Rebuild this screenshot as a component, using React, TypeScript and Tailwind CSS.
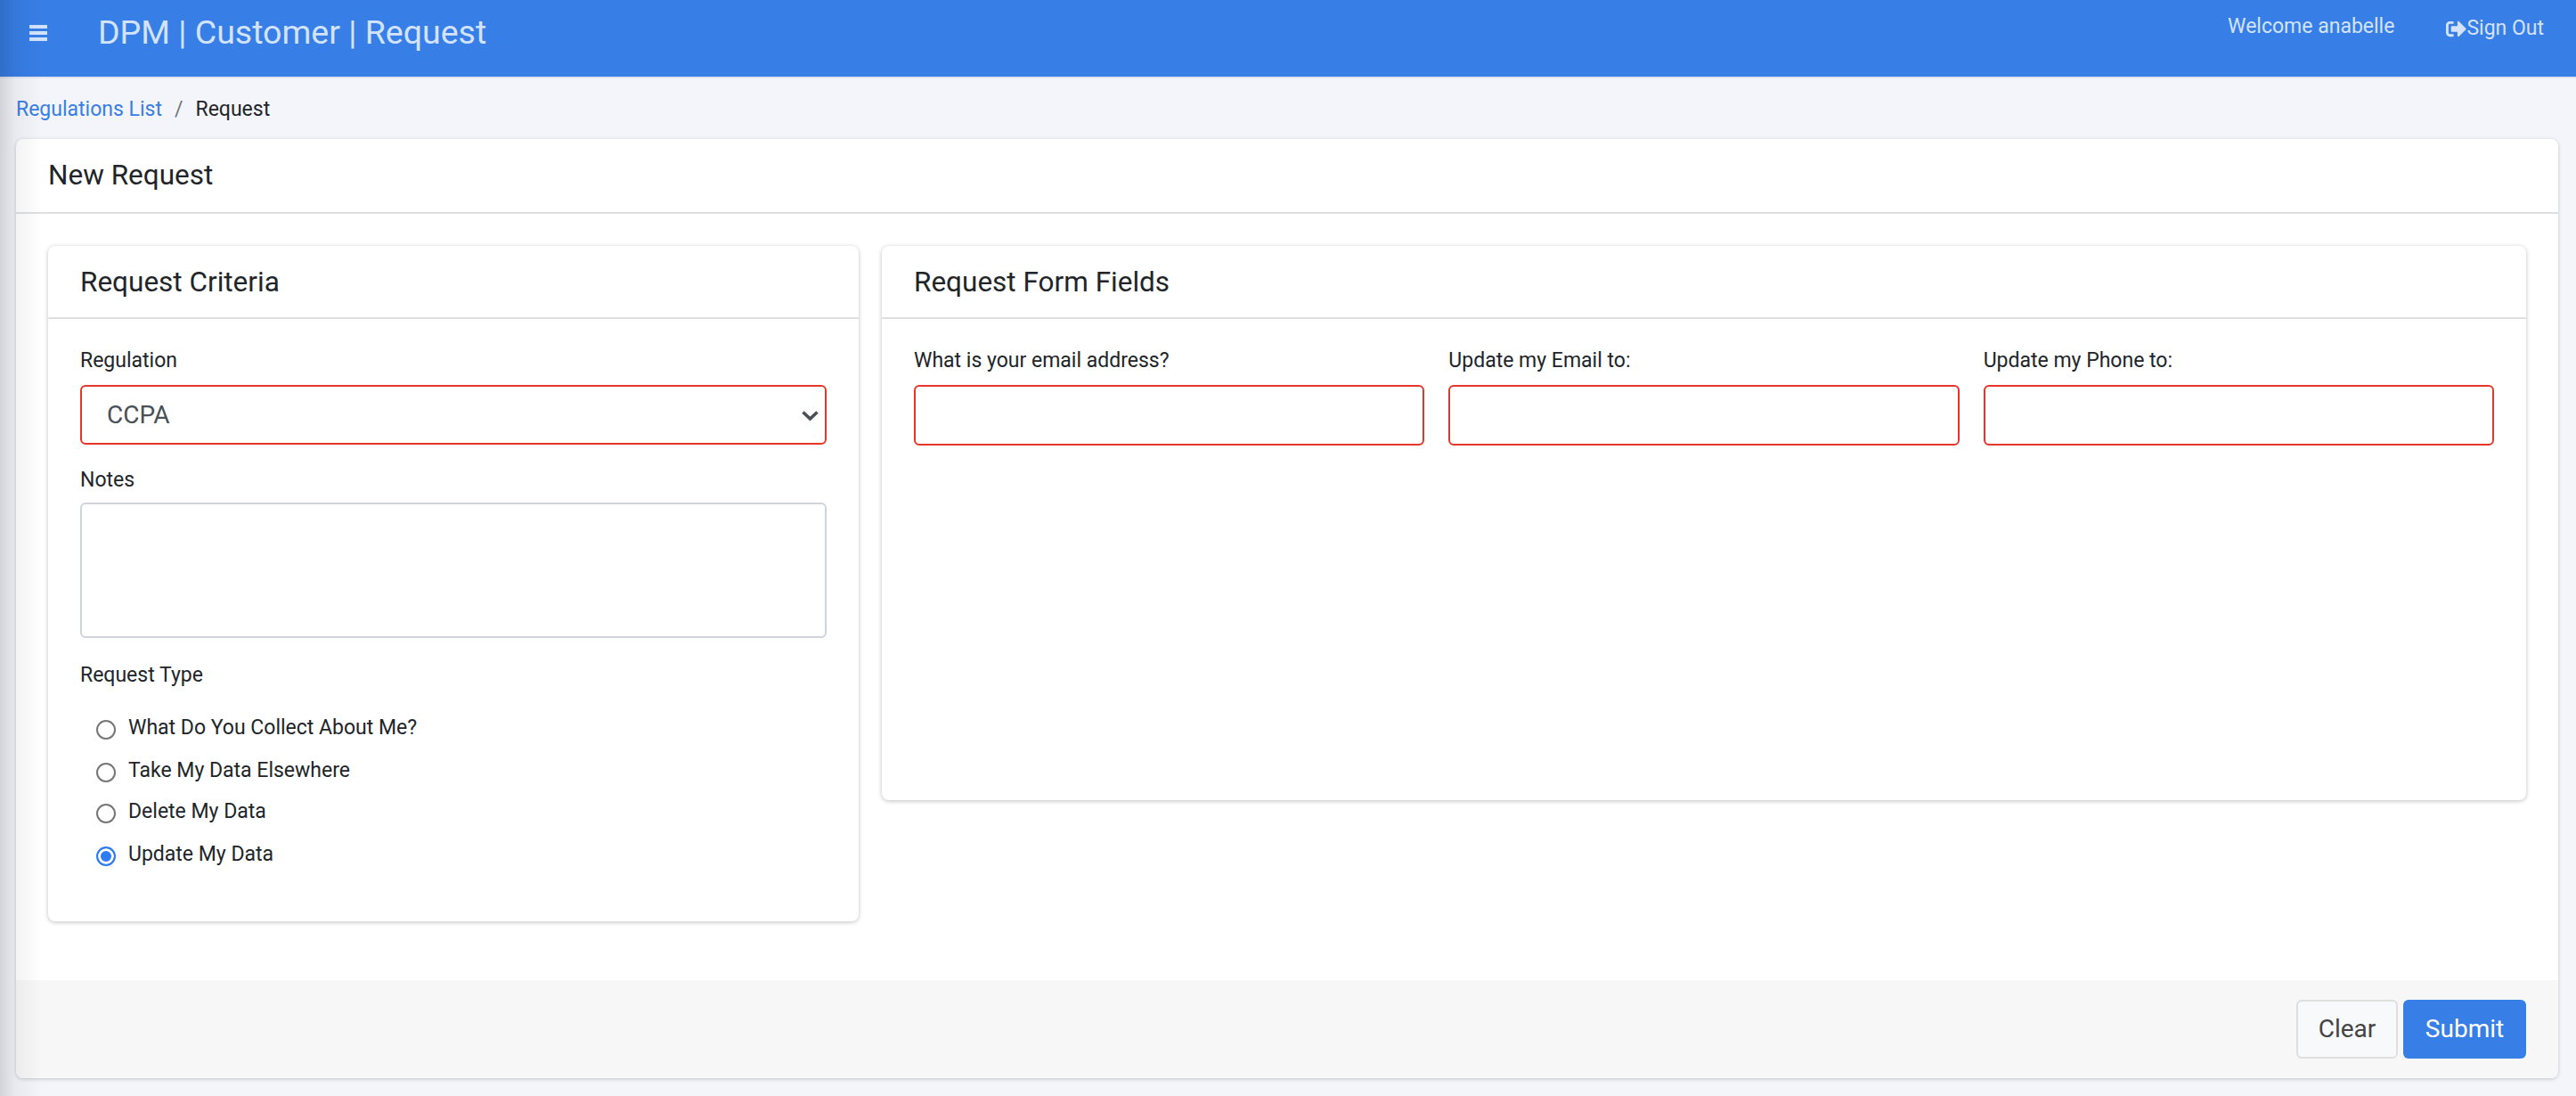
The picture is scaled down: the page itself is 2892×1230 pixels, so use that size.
import { FaSignOutAlt } from "react-icons/fa";

const requestTypes = [
  { label: "What Do You Collect About Me?", mt: "mt-0" },
  { label: "Take My Data Elsewhere", mt: "mt-[16px]" },
  { label: "Delete My Data", mt: "mt-[14px]" },
  { label: "Update My Data", mt: "mt-[16px]" },
];

const formFields = ["What is your email address?", "Update my Email to:", "Update my Phone to:"];

const SubCardHeader = ({ title }: { title: string }) => (
  <div className="flex h-[82px] items-center border-b-2 border-[#dedfe0] px-[36px] pt-[2px] text-[31.5px] text-[#212529]">
    {title}
  </div>
);

export default function App() {
  return (
    <div className="relative flex h-[1230px] flex-col overflow-hidden bg-[#f4f5fa] font-['Roboto',sans-serif] text-[#212529]">
      {/* sidebar edge shadow */}
      <div className="pointer-events-none absolute inset-y-0 left-0 z-10 w-[48px] bg-gradient-to-r from-[#00000022] via-[#0000000c] via-35% to-transparent" />

      <header className="flex h-[88px] shrink-0 items-start border-b-2 border-[#e3e6ee] bg-[#377ee6] text-[#d3e3fb]">
        <button className="ml-[33px] mt-[28px] flex w-[20px] flex-col gap-[3px]">
          <span className="h-[4px] bg-[#d3e3fb]" />
          <span className="h-[4px] bg-[#d3e3fb]" />
          <span className="h-[4px] bg-[#d3e3fb]" />
        </button>
        <h1 className="ml-[57px] mt-[14px] text-[37.5px] leading-[44px] font-normal">DPM | Customer | Request</h1>
        <span className="ml-auto mt-[15px] text-[23px] leading-[30px]">Welcome anabelle</span>
        <a className="ml-[58px] mr-[36px] mt-[17px] flex items-center text-[23px] leading-[30px]">
          <FaSignOutAlt className="h-[23px] w-[23px]" />
          Sign Out
        </a>
      </header>

      <nav className="flex h-[68px] shrink-0 items-center pl-[18px] pt-[2px] text-[23px]">
        <a className="text-[#377ee6]">Regulations List</a>
        <span className="mx-[14px] text-[#6c757d]">/</span>
        <span>Request</span>
      </nav>

      <main className="ml-[18px] mr-[20px] flex h-[1054px] flex-col rounded-[8px] bg-white shadow-[0_1px_4px_rgba(0,0,0,0.2)]">
        <div className="flex h-[84px] shrink-0 items-center border-b-2 border-[#dedfe0] px-[36px] text-[31.5px]">
          New Request
        </div>

        <div className="flex flex-1 items-start gap-[26px] px-[36px] pt-[36px]">
          <section className="h-[758px] w-[910px] shrink-0 rounded-[8px] bg-white shadow-[0_1px_5px_rgba(0,0,0,0.25)]">
            <SubCardHeader title="Request Criteria" />
            <div className="px-[36px] pt-[31px]">
              <label className="block text-[23px] leading-[32px]">Regulation</label>
              <div className="relative mt-[11px]">
                <select className="h-[67px] w-full appearance-none rounded-[6px] border-2 border-[#e8352a] bg-white px-[28px] text-[28px] text-[#495057] outline-none">
                  <option>CCPA</option>
                </select>
                <svg viewBox="0 0 19 12" className="pointer-events-none absolute right-[9px] top-[29px] h-[12px] w-[19px]" fill="none" stroke="#4a4f55" strokeWidth="3.6">
                  <path d="M1.5 1.5l8 7.5 8-7.5" />
                </svg>
              </div>

              <label className="mt-[24px] block text-[23px] leading-[32px]">Notes</label>
              <textarea className="mt-[9px] block h-[152px] w-full resize-none rounded-[6px] border-2 border-[#ced4da] bg-white outline-none" />

              <label className="mt-[26px] block text-[23px] leading-[32px]">Request Type</label>
              <div className="mt-[27px] pl-[18px]">
                {requestTypes.map((item, i) => (
                  <label key={item.label} className={`flex items-center gap-[14px] text-[23px] leading-[32px] ${item.mt}`}>
                    <input
                      type="radio"
                      name="type"
                      defaultChecked={i === 3}
                      className="mt-[4px] h-[22px] w-[22px] appearance-none rounded-full border-2 border-[#767676] bg-white checked:border-[#2f7bf6] checked:bg-[#2f7bf6] checked:shadow-[inset_0_0_0_3px_white]"
                    />
                    {item.label}
                  </label>
                ))}
              </div>
            </div>
          </section>

          <section className="h-[622px] flex-1 rounded-[8px] bg-white shadow-[0_1px_5px_rgba(0,0,0,0.25)]">
            <SubCardHeader title="Request Form Fields" />
            <div className="grid grid-cols-3 gap-[27px] px-[36px] pt-[31px]">
              {formFields.map((field) => (
                <div key={field}>
                  <label className="block text-[23px] leading-[32px]">{field}</label>
                  <input className="mt-[11px] block h-[68px] w-full rounded-[6px] border-2 border-[#e8352a] bg-white outline-none" />
                </div>
              ))}
            </div>
          </section>
        </div>

        <footer className="flex h-[110px] shrink-0 items-center justify-end gap-[6px] rounded-b-[8px] bg-[#f7f7f7] pr-[36px]">
          <button className="h-[66px] w-[114px] rounded-[6px] border-2 border-[#dfdfdf] bg-[#f8f9fa] text-[28px] text-[#444444]">Clear</button>
          <button className="h-[66px] w-[138px] rounded-[6px] bg-[#377ee6] text-[28px] text-white">Submit</button>
        </footer>
      </main>
    </div>
  );
}
